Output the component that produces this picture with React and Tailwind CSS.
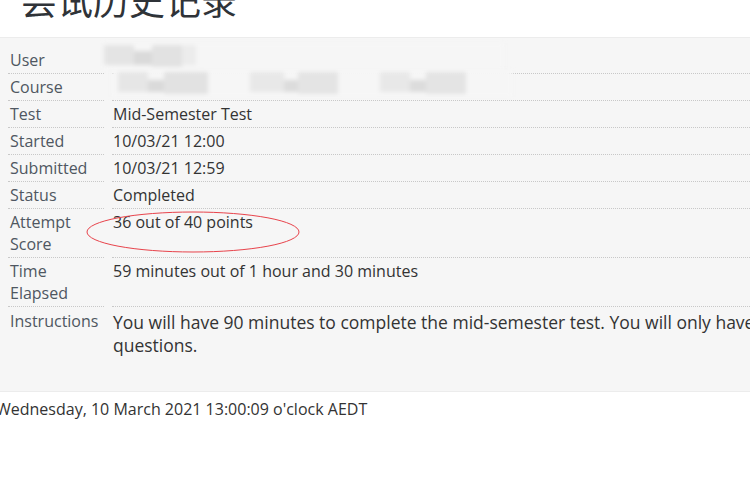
const ROWS = [
  { label: 'User', value: '', blur: 'user' },
  { label: 'Course', value: '', blur: 'course' },
  { label: 'Test', value: 'Mid-Semester Test' },
  { label: 'Started', value: '10/03/21 12:00' },
  { label: 'Submitted', value: '10/03/21 12:59' },
  { label: 'Status', value: 'Completed' },
  { label: 'Attempt Score', value: '36 out of 40 points', circled: true },
  { label: 'Time Elapsed', value: '59 minutes out of 1 hour and 30 minutes' },
];

function Redacted({ kind }) {
  if (kind === 'user') {
    return (
      <div className="absolute -left-[8px] top-[-4px] flex h-[27px] w-[400px] items-stretch bg-[#f6f6f6] blur-[2px]">
        <div className="mt-[2px] h-[20px] w-[30px] bg-[#e4e4e4]" />
        <div className="mt-[8px] h-[14px] w-[18px] bg-[#dadada]" />
        <div className="mt-[2px] h-[22px] w-[30px] bg-[#e2e2e2]" />
        <div className="mt-[2px] h-[20px] w-[14px] bg-[#ececec]" />
      </div>
    );
  }
  return (
    <div className="absolute left-0 top-[-4px] flex h-[27px] w-[400px] items-stretch bg-[#f6f6f6] blur-[2px]">
      <div className="ml-[6px] mt-[2px] h-[20px] w-[30px] bg-[#e6e6e6]" />
      <div className="mt-[10px] h-[12px] w-[16px] bg-[#dadada]" />
      <div className="mt-[2px] h-[22px] w-[44px] bg-[#e2e2e2]" />
      <div className="ml-[42px] mt-[2px] h-[20px] w-[34px] bg-[#e8e8e8]" />
      <div className="mt-[10px] h-[12px] w-[14px] bg-[#dcdcdc]" />
      <div className="mt-[2px] h-[22px] w-[40px] bg-[#e4e4e4]" />
      <div className="ml-[42px] mt-[2px] h-[20px] w-[30px] bg-[#e8e8e8]" />
      <div className="mt-[10px] h-[12px] w-[16px] bg-[#dcdcdc]" />
      <div className="mt-[2px] h-[22px] w-[40px] bg-[#e4e4e4]" />
    </div>
  );
}

export default function App() {
  return (
    <div className="h-[500px] w-[750px] overflow-hidden bg-white font-['Open_Sans',sans-serif] text-[#333]">
      <h1 className="ml-[21px] mt-[-25px] h-[62px] font-['Noto_Sans_CJK_SC',sans-serif] text-[36px] font-normal leading-[48px] text-[#2f3338]">
        尝试历史记录
      </h1>

      <div className="border-y border-[#ececec] bg-[#f6f6f6] pb-[34px] pt-[9px]">
        {ROWS.map((row) => (
          <div key={row.label} className="grid grid-cols-[96px_1fr] gap-x-[8px] pl-[8px] text-[16px] leading-[22px]">
            <div className="border-b border-dotted border-[#c8c8c8] pb-[2px] pl-[2px] pt-[2px] text-[#4f5761]">
              {row.label.split(' ').map((w) => (
                <div key={w}>{w}</div>
              ))}
            </div>
            <div className="relative border-b border-dotted border-[#c8c8c8] pb-[2px] pl-[1px] pt-[2px]">
              {row.value || '\u00a0'}
              {row.blur && <Redacted kind={row.blur} />}
              {row.circled && (
                <svg className="absolute left-[-26px] top-[1px] overflow-visible" width="216" height="44" viewBox="0 0 216 44">
                  <ellipse cx="107" cy="22" rx="106" ry="20" fill="none" stroke="#e8434b" strokeWidth="1" />
                </svg>
              )}
            </div>
          </div>
        ))}
        <div className="grid grid-cols-[96px_1fr] gap-x-[8px] pl-[8px] pt-[3px]">
          <div className="pl-[2px] text-[16px] leading-[22px] text-[#4f5761]">Instructions</div>
          <div className="whitespace-nowrap pl-[1px] pt-[1px] text-[17.5px] leading-[23px] text-[#333]">
            You will have 90 minutes to complete the mid-semester test. You will only have
            <br />
            questions.
          </div>
        </div>
      </div>

      <p className="ml-[-4px] mt-[6px] text-[16px] leading-[22px] text-[#333]">
        Wednesday, 10 March 2021 13:00:09 o'clock AEDT
      </p>
    </div>
  );
}
